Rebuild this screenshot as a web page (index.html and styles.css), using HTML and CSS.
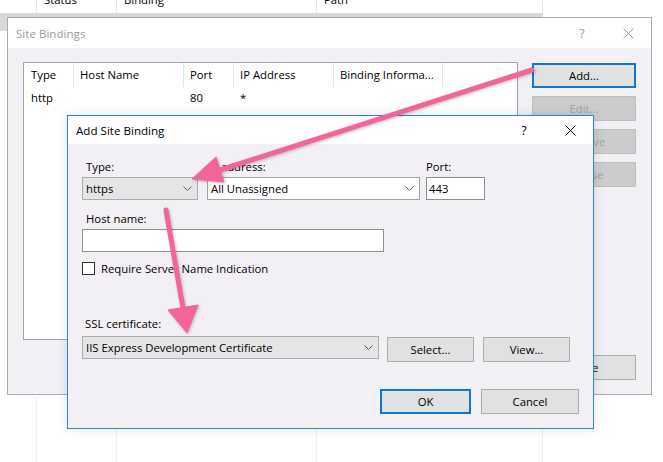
FILE: index.html
```html
<!DOCTYPE html>
<html>
<head>
<meta charset="utf-8">
<title>Site Bindings</title>
<link rel="stylesheet" href="styles.css">
</head>
<body>
<div class="bglist">
  <div class="bgc bgh"></div><div class="bgc bgh">Status</div><div class="bgc bgh">Binding</div><div class="bgc bgh">Path</div><div class="bgc bgh last"></div>
  <div class="bgc bgs"></div><div class="bgc bgs">Started (http)</div><div class="bgc bgs">*:80 (http)</div><div class="bgc bgs">C:\Users\dev\SpatialClient</div><div class="bgc last"></div>
  <div class="bgc"></div><div class="bgc"></div><div class="bgc"></div><div class="bgc"></div><div class="bgc last"></div>
</div>

<div class="win sb">
  <div class="titlebar tb-sb">
    <span class="ttl">Site Bindings</span>
    <span class="cap">?</span>
    <span class="cap"><svg width="11" height="11" viewBox="0 0 11 11"><path d="M0.5 0.5 L10.5 10.5 M10.5 0.5 L0.5 10.5" stroke="currentColor" stroke-width="1" fill="none"/></svg></span>
  </div>
  <div class="sb-body">
    <div class="lv">
      <div class="lv-grid lv-head">
        <div class="lvh first">Type</div><div class="lvh">Host Name</div><div class="lvh">Port</div><div class="lvh">IP Address</div><div class="lvh">Binding Informa...</div><div class="lvh none"></div>
      </div>
      <div class="lv-grid lv-row">
        <div class="lvc first">http</div><div class="lvc"></div><div class="lvc">80</div><div class="lvc">*</div><div class="lvc"></div><div class="lvc"></div>
      </div>
    </div>
    <div class="btncol">
      <button class="btn btn-side focus">Add...</button>
      <button class="btn btn-side dis">Edit...</button>
      <button class="btn btn-side dis">Remove</button>
      <button class="btn btn-side dis">Browse</button>
      <button class="btn btn-side push-down">Close</button>
    </div>
  </div>
</div>

<div class="win asb">
  <div class="titlebar tb-asb">
    <span class="ttl">Add Site Binding</span>
    <span class="cap">?</span>
    <span class="cap"><svg width="11" height="11" viewBox="0 0 11 11"><path d="M0.5 0.5 L10.5 10.5 M10.5 0.5 L0.5 10.5" stroke="currentColor" stroke-width="1" fill="none"/></svg></span>
  </div>
  <div class="asb-body">
    <div class="row1">
      <div class="field f-type">
        <div class="lbl">Type:</div>
        <div class="combo gray"><span>https</span><svg class="chev" width="9" height="5" viewBox="0 0 9 5"><polyline points="0.5,0.5 4.5,4.5 8.5,0.5" fill="none" stroke="#5a5a5a" stroke-width="1"/></svg></div>
      </div>
      <div class="field f-ip">
        <div class="lbl lbl-ip">IP address:</div>
        <div class="combo white"><span>All Unassigned</span><svg class="chev" width="9" height="5" viewBox="0 0 9 5"><polyline points="0.5,0.5 4.5,4.5 8.5,0.5" fill="none" stroke="#5a5a5a" stroke-width="1"/></svg></div>
      </div>
      <div class="field f-port">
        <div class="lbl lbl-port">Port:</div>
        <div class="input port-in">443</div>
      </div>
    </div>
    <div class="field f-host">
      <div class="lbl">Host name:</div>
      <div class="input host-in"></div>
    </div>
    <div class="chkrow">
      <span class="chk"></span><span>Require Server Name Indication</span>
    </div>
    <div class="field f-ssl">
      <div class="lbl lbl-ssl">SSL certificate:</div>
      <div class="certrow">
        <div class="combo gray cert"><span>IIS Express Development Certificate</span><svg class="chev" width="9" height="5" viewBox="0 0 9 5"><polyline points="0.5,0.5 4.5,4.5 8.5,0.5" fill="none" stroke="#5a5a5a" stroke-width="1"/></svg></div>
        <button class="btn btn-sel">Select...</button>
        <button class="btn btn-view">View...</button>
      </div>
    </div>
    <div class="footer">
      <button class="btn btn-ok focus">OK</button>
      <button class="btn btn-cancel">Cancel</button>
    </div>
  </div>
</div>

<svg class="arrows" width="663" height="462" viewBox="0 0 663 462">
  <g fill="#f3649a" stroke="#f3649a">
    <line x1="532" y1="70" x2="220" y2="170" stroke-width="5" stroke-linecap="round"/>
    <polygon points="192,179 224,182 216,157" stroke-width="1" stroke-linejoin="round"/>
    <line x1="166" y1="210" x2="183" y2="308" stroke-width="5" stroke-linecap="round"/>
    <polygon points="187,333 198,305 168,310" stroke-width="1" stroke-linejoin="round"/>
  </g>
</svg>
</body>
</html>
```

FILE: styles.css
```css
* { box-sizing: border-box; }
html, body { margin: 0; padding: 0; }
body {
  width: 663px;
  height: 462px;
  overflow: hidden;
  position: relative;
  background: #fff;
  font-family: "Open Sans", "Noto Sans", sans-serif;
  font-size: 11.3px;
  color: #000;
}

/* background list view */
.bglist {
  display: grid;
  grid-template-columns: 37px 80px 200px 226px 1fr;
  grid-template-rows: 24px 18px 1fr;
  height: 475px;
  margin-top: -11px;
}
.bgc {
  border-right: 1px solid #e9f0f9;
  padding-left: 7px;
  line-height: 18px;
  white-space: nowrap;
  overflow: hidden;
}
.bgh { border-right-color: #e5e5e5; line-height: 22px; }
.bgs { background: #d9d9d9; border-right-color: #d9d9d9; }
.bgc.last { border-right: none; }

/* windows */
.win {
  position: absolute;
  display: flex;
  flex-direction: column;
  background: #f3f0f5;
}
.sb {
  left: 7px; top: 17px;
  width: 645px; height: 378px;
  border: 1px solid #ababab;
}
.asb {
  left: 67px; top: 115px;
  width: 527px; height: 314px;
  border: 1px solid #2a85d9;
  box-shadow: 0 0 10px rgba(0,0,0,0.12);
}
.titlebar {
  display: flex;
  align-items: center;
  background: #fff;
  flex: none;
}
.tb-sb { height: 30px; color: #9c9c9c; }
.tb-asb { height: 28px; color: #000; }
.ttl { flex: 1; padding-left: 8px; font-size: 11.6px; }
.cap {
  width: 46px;
  height: 100%;
  display: flex;
  align-items: center;
  justify-content: center;
  font-size: 12.5px;
}

/* site bindings body */
.sb-body {
  flex: 1;
  display: flex;
  padding: 14px 15px 14px 15px;
}
.lv {
  width: 495px;
  height: 278px;
  background: #fff;
  border: 1px solid #a3a3a3;
  flex: none;
}
.lv-grid {
  display: grid;
  grid-template-columns: 50px 110px 50px 100px 109px 1fr;
}
.lvh {
  height: 24px;
  line-height: 24px;
  padding-left: 6px;
  border-right: 1px solid #e5e5e5;
  white-space: nowrap;
  overflow: hidden;
}
.lvh.none { border-right: none; }
.lvc { height: 22px; line-height: 22px; padding-left: 6px; white-space: nowrap; }
.first { padding-left: 7px; }

.btncol {
  margin-left: 14px;
  width: 104px;
  display: flex;
  flex-direction: column;
  gap: 8px;
  padding-top: 1px;
}
.btn {
  font-family: inherit;
  font-size: inherit;
  color: #000;
  background: #e1e1e1;
  border: 1px solid #adadad;
  padding: 0;
  margin: 0;
  height: 25px;
  text-align: center;
}
.btn-side { width: 104px; }
.btn.focus { border: 2px solid #0a78d7; }
.btn.dis { background: #cccccc; border-color: #bfbfbf; color: #a3a3a3; }
.push-down { margin-top: auto; }

/* add site binding body */
.asb-body {
  flex: 1;
  display: flex;
  flex-direction: column;
  padding: 15px 14px 14px 14px;
}
.field { display: flex; flex-direction: column; }
.lbl { height: 16px; line-height: 16px; margin-bottom: 2px; padding-left: 4px; }
.lbl-ip { padding-left: 1px; }
.lbl-port { padding-left: 0; }
.row1 { display: flex; }
.f-type { width: 116px; }
.f-ip { width: 213px; margin-left: 9px; }
.f-port { width: 59px; margin-left: 6px; }
.combo {
  height: 23px;
  display: flex;
  align-items: center;
  justify-content: space-between;
  padding: 0 5px 0 3px;
  white-space: nowrap;
}
.combo.gray { background: #e5e5e5; border: 1px solid #acacac; }
.combo.white { background: #fff; border: 1px solid #a2a2a2; }
.chev { flex: none; }
.input {
  height: 23px;
  line-height: 21px;
  background: #fff;
  border: 1px solid #8f8f8f;
  padding-left: 2px;
}
.f-host { margin-top: 11px; }
.host-in { width: 302px; }
.chkrow {
  margin-top: 10px;
  display: flex;
  align-items: center;
  gap: 6px;
  height: 13px;
}
.chk {
  width: 13px; height: 13px;
  border: 1px solid #333;
  background: #fff;
  flex: none;
}
.f-ssl { margin-top: 41px; }
.lbl-ssl { margin-bottom: 4px; padding-left: 3px; }
.certrow { display: flex; align-items: flex-start; }
.cert { width: 297px; }
.btn-sel { width: 87px; margin-left: 8px; margin-top: 1px; }
.btn-view { width: 87px; margin-left: 9px; margin-top: 1px; }
.footer {
  margin-top: auto;
  display: flex;
  justify-content: flex-end;
  gap: 10px;
}
.btn-ok { width: 91px; }
.btn-cancel { width: 98px; }

.arrows {
  position: absolute;
  left: 0; top: 0;
  filter: drop-shadow(1px 1px 1.5px rgba(0,0,0,0.25));
  pointer-events: none;
}
```
